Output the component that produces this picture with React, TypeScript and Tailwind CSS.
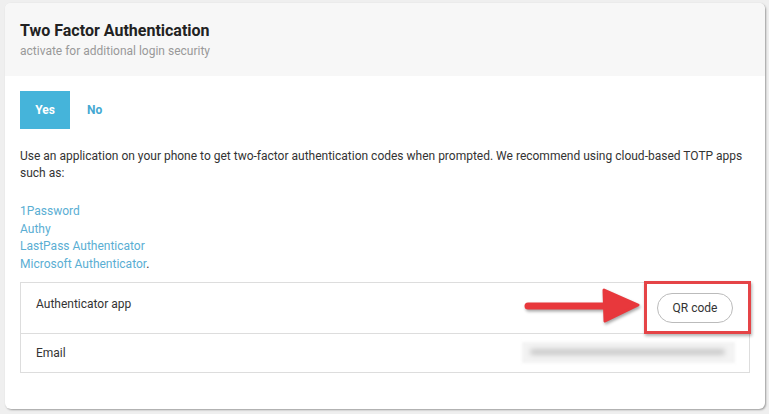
import React from "react";

export default function App() {
  return (
    <div className="w-[769px] h-[414px] bg-[#efefef] pt-[3px] pl-[5px] overflow-hidden" style={{ fontFamily: "Roboto, 'Liberation Sans', sans-serif" }}>
      <div className="w-[760px] h-[406px] bg-white rounded-[6px] shadow-[1px_1px_2px_rgba(0,0,0,0.35)] overflow-hidden flex flex-col">
        <div className="h-[73px] bg-[#f7f7f7] px-[15px] pt-[18px]">
          <div className="text-[16px] font-bold leading-[20px] text-[#222]">Two Factor Authentication</div>
          <div className="text-[12px] leading-[16px] text-[#999] mt-[2px]">activate for additional login security</div>
        </div>
        <div className="px-[15px] pt-[15px] relative">
          <div className="flex items-center">
            <div className="w-[50px] h-[38px] bg-[#45b4da] text-white text-[12px] font-bold flex items-center justify-center">Yes</div>
            <div className="ml-[17px] text-[12px] font-bold text-[#45a8d2]">No</div>
          </div>
          <p className="mt-[19px] text-[12px] leading-[17px] text-[#333] w-[735px]">
            Use an application on your phone to get two-factor authentication codes when prompted. We recommend using cloud-based TOTP apps such as:
          </p>
          <div className="mt-[21px] text-[12px] leading-[17.7px] text-[#5aaed3] flex flex-col">
            <span>1Password</span>
            <span>Authy</span>
            <span>LastPass Authenticator</span>
            <span>Microsoft Authenticator<span className="text-[#333]">.</span></span>
          </div>
          <div className="mt-[8px] w-[730px] border border-[#dddddd] text-[12px] text-[#333]">
            <div className="h-[51px] border-b border-[#dddddd] flex items-start pl-[15px] pt-[12px] relative">
              <span>Authenticator app</span>
              <svg className="absolute left-[503px] top-[4px]" width="118" height="36" viewBox="0 0 118 36" style={{ filter: "drop-shadow(1px 2px 1.5px rgba(0,0,0,0.35))" }}>
                <path d="M4 19 L84 19" stroke="#e8383c" strokeWidth="7" strokeLinecap="round" />
                <path d="M80 3 L114 18 L81 34 Z" fill="#e8383c" stroke="#e8383c" strokeWidth="3" strokeLinejoin="round" />
              </svg>
              <div className="absolute left-[636px] top-[10px] w-[76px] h-[30px] rounded-full border border-[#bbbbbb] bg-white flex items-center justify-center text-[12px] text-[#333]">QR code</div>
              <div className="absolute left-[623px] top-[-2px] w-[107px] h-[53px] border-[3px] border-[#e54447] shadow-[1px_2px_3px_rgba(0,0,0,0.3)]"></div>
            </div>
            <div className="h-[38px] flex items-center pl-[15px] relative">
              <span>Email</span>
              <div className="absolute left-[501px] top-[8px] w-[213px] h-[21px] bg-[#f3f3f3] blur-[1.5px] flex items-center px-[8px]">
                <div className="w-[195px] h-[6px] bg-[#c9c9c9] rounded-full blur-[2px]"></div>
              </div>
            </div>
          </div>
        </div>
      </div>
    </div>
  );
}
